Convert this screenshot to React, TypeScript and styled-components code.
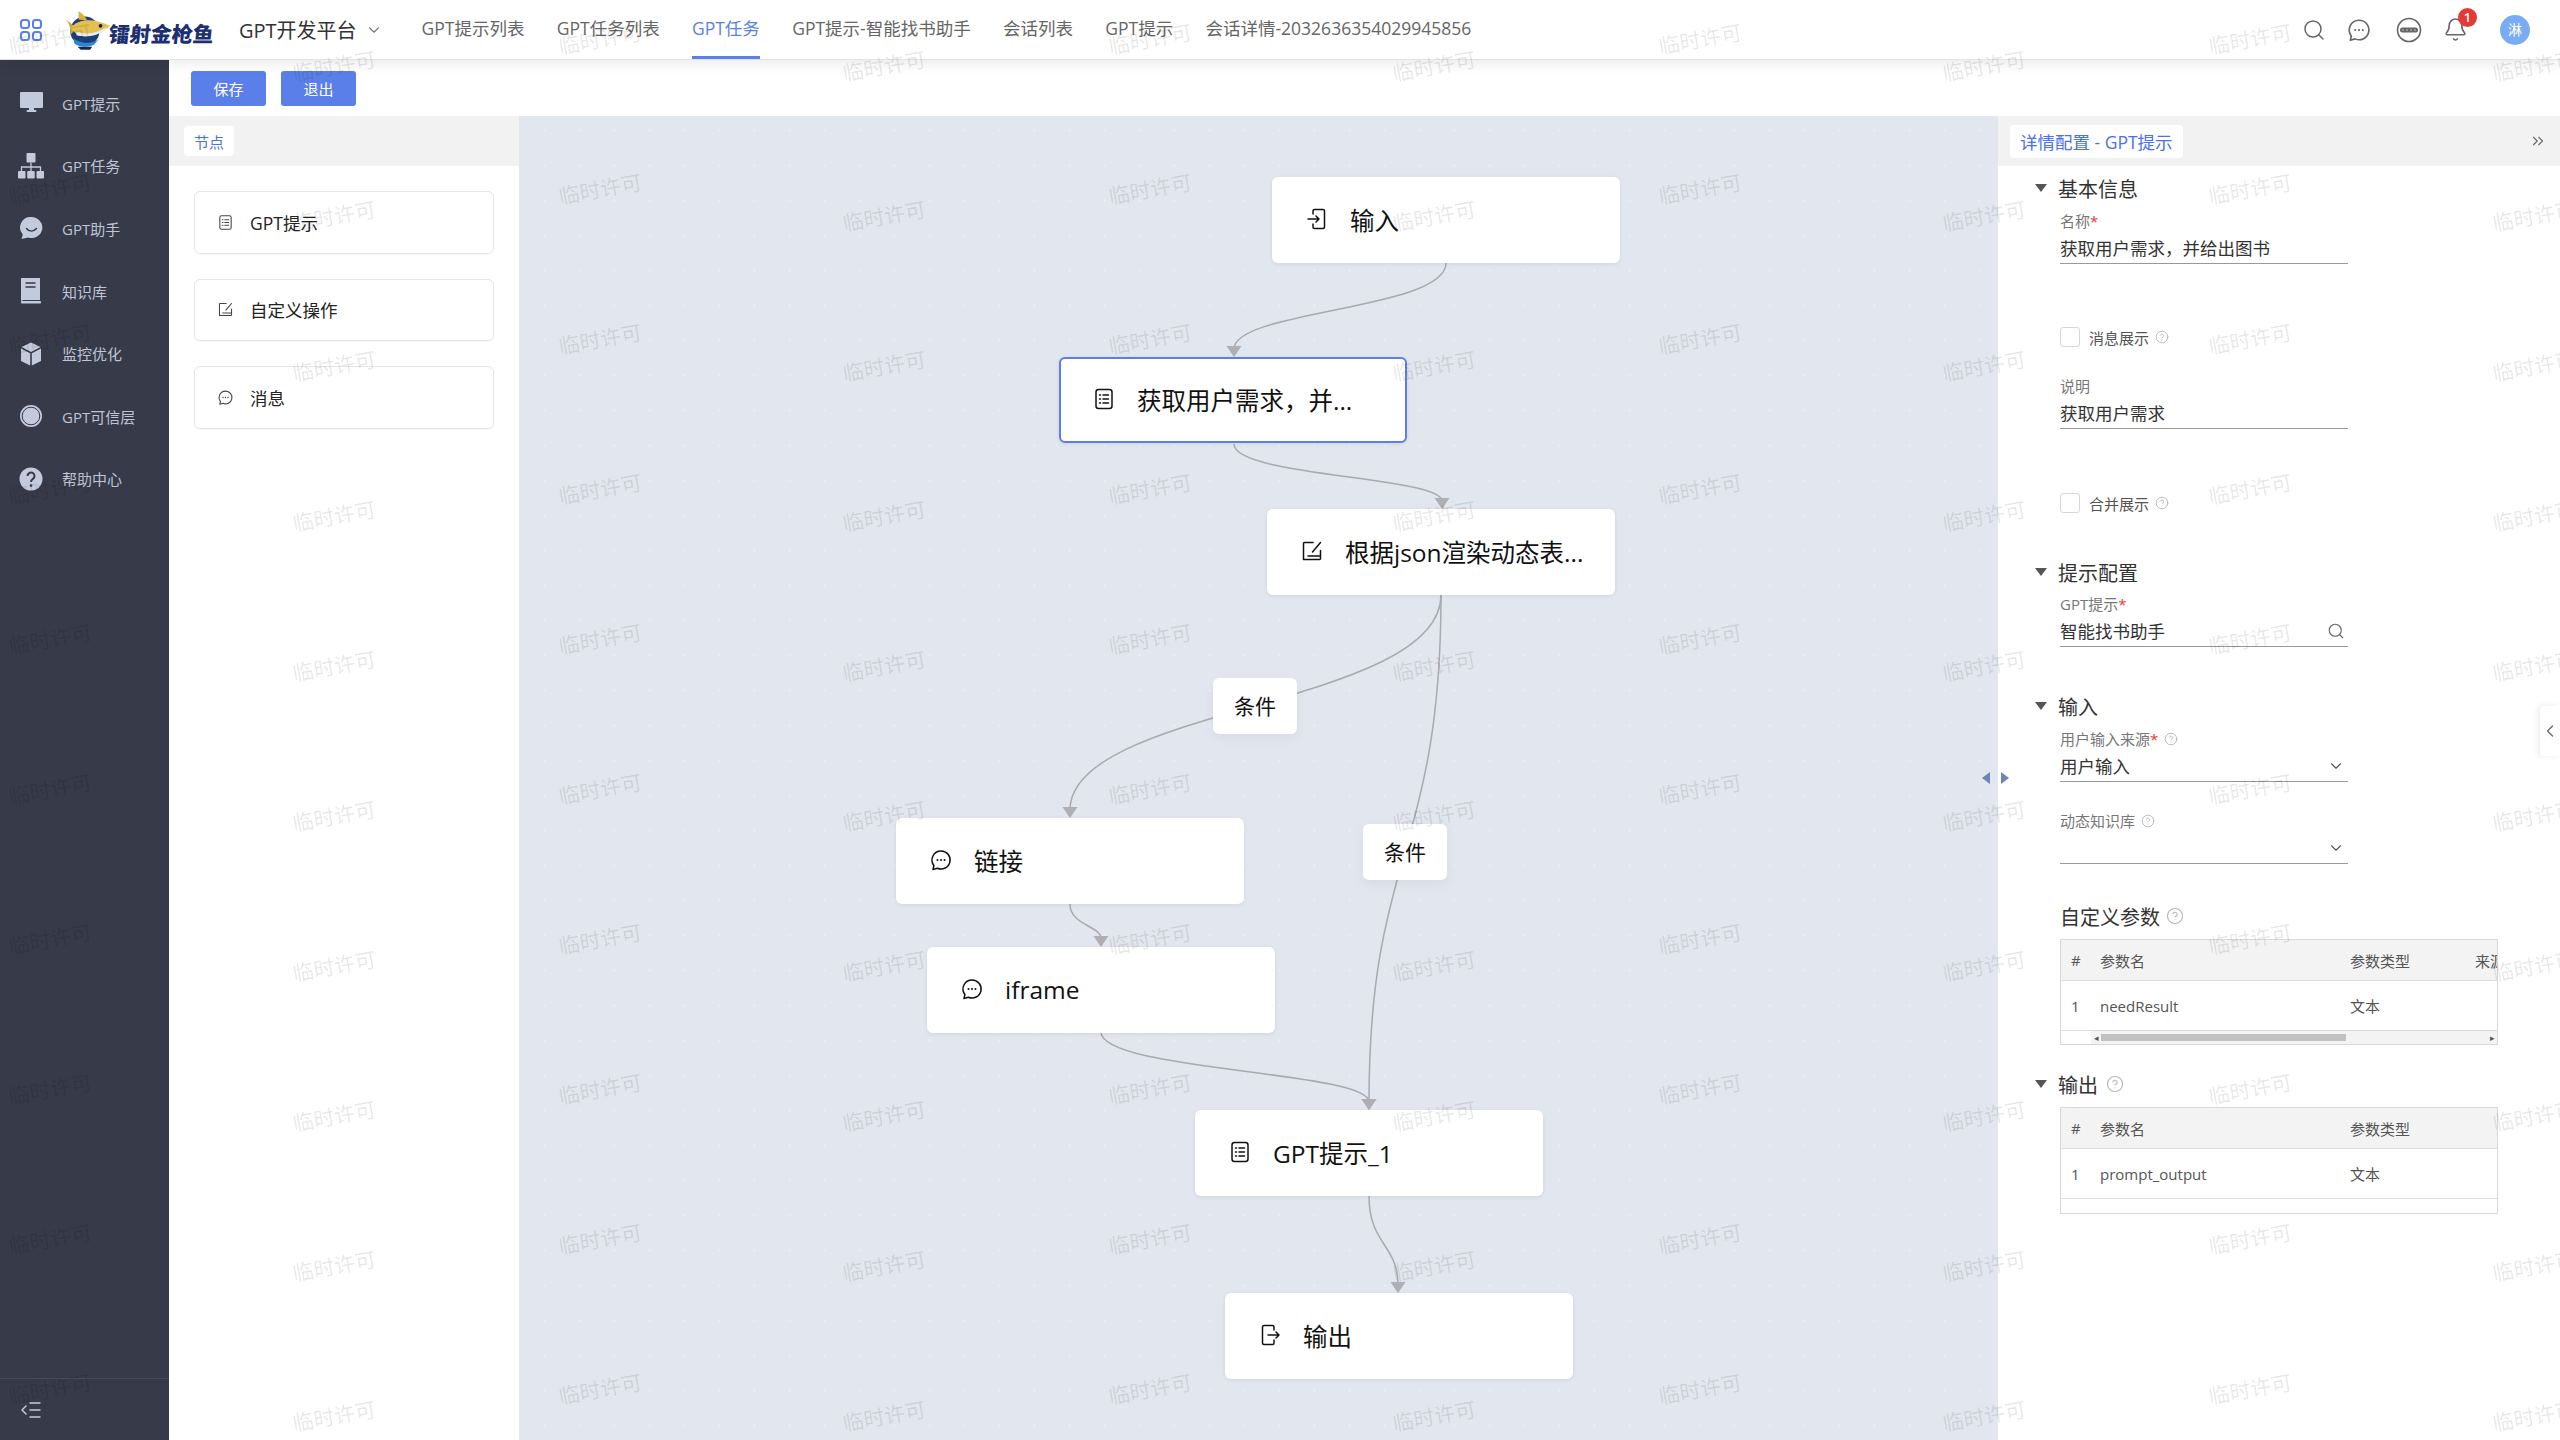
import React from "react"
import styled, { createGlobalStyle } from "styled-components"
import { Search, ChevronDown, ChevronLeft, ChevronsRight, CircleHelp, Bell, IndentDecrease } from "lucide-react"

const GlobalStyle = createGlobalStyle`
  html, body { margin: 0; padding: 0; background: #fff; }
  * { box-sizing: border-box; }
  body {
    font-family: "Open Sans", "Noto Sans CJK SC", sans-serif;
    color: #333;
  }
`

const BLUE = "#5b7fe8"
const TAB_BLUE = "#4a6ff0"

// canvas sits at page (519, 116)
const CX = 519
const CY = 116

type IconKind = "list" | "edit" | "chat" | "in" | "out"

const NodeIcon = ({ kind, size, color = "#111" }: { kind: IconKind; size: number; color?: string }) => (
  <svg width={size} height={size} viewBox="0 0 24 24" fill="none" stroke={color} strokeWidth="1.5" strokeLinecap="round" strokeLinejoin="round">
    {kind === "list" && (
      <>
        <rect x="4" y="2.5" width="16" height="19" rx="2.5" />
        <path d="M7.5 8h1M11 8h5.5M7.5 12h1M11 12h5.5M7.5 16h1M11 16h5.5" />
      </>
    )}
    {kind === "edit" && <path d="M13 3.500H4.500a1 1 0 0 0-1 1v16h16a1 1 0 0 0 1-1V11.500M20.500 3.500l-8 9.500M8 17h12.500" />}
    {kind === "chat" && (
      <>
        <path d="M12 3a9 9 0 1 1-3.6 17.2L4 21.5l.9-4A9 9 0 0 1 12 3z" />
        <path d="M8.5 12h.01M12 12h.01M15.5 12h.01" strokeWidth="2" />
      </>
    )}
    {kind === "in" && <path d="M8 7V4a1.5 1.5 0 0 1 1.5-1.5H18A1.5 1.5 0 0 1 19.5 4v16a1.5 1.5 0 0 1-1.5 1.5H9.5A1.5 1.5 0 0 1 8 20v-3M3 12h11M11 9l3 3-3 3" />}
    {kind === "out" && <path d="M16 7V4a1.5 1.5 0 0 0-1.5-1.5H6A1.5 1.5 0 0 0 4.500 4v16A1.5 1.5 0 0 0 6 21.500h8.500A1.5 1.5 0 0 0 16 20v-3M10 12h11M18 9l3 3-3 3" />}
  </svg>
)

const sideIcons: Record<string, React.ReactNode> = {
  monitor: (
    <svg width="26" height="26" viewBox="0 0 26 26" fill="#c3cadc">
      <path d="M3 2h21a1 1 0 0 1 1 1v14a1 1 0 0 1-1 1H3a1 1 0 0 1-1-1V3a1 1 0 0 1 1-1z" />
      <rect x="11" y="18" width="5" height="3" />
      <rect x="8.500" y="20" width="10" height="2" rx="1" />
    </svg>
  ),
  org: (
    <svg width="26" height="26" viewBox="0 0 26 26" fill="#c3cadc">
      <rect x="8.500" y="0" width="9" height="9.500" rx="1" />
      <rect x="0" y="18" width="7.500" height="7.500" rx="1" />
      <rect x="9.200" y="18" width="7.500" height="7.500" rx="1" />
      <rect x="18.500" y="18" width="7.500" height="7.500" rx="1" />
      <path d="M13 9.500V14M3.500 18v-4h19v4M13 14v4" stroke="#c3cadc" strokeWidth="1.300" fill="none" />
    </svg>
  ),
  bubble: (
    <svg width="26" height="26" viewBox="0 0 26 26">
      <path d="M13.500 2a11 10.500 0 1 1-3.500 20.500L3.500 24l1.300-4.500A10.500 10.500 0 0 1 13.500 2z" fill="#c3cadc" />
      <path d="M8.500 13.500c2.500 3.500 7 3.500 10 0" stroke="#363948" strokeWidth="1.400" fill="none" strokeLinecap="round" />
    </svg>
  ),
  book: (
    <svg width="26" height="26" viewBox="0 0 26 26">
      <path d="M3 0h19v22H5.500C4 22 3 23 3 24z" fill="#c3cadc" />
      <rect x="3" y="23" width="20" height="2.500" rx=".8" fill="#c3cadc" />
      <path d="M7.500 5h10M7.500 9h10" stroke="#363948" strokeWidth="1.300" />
    </svg>
  ),
  cube: (
    <svg width="26" height="26" viewBox="0 0 26 26" fill="#c3cadc">
      <path d="M13 1.500l9.500 4.500-9.500 5-9.500-5z" />
      <path d="M3 7.500l9.200 4.800v12.200L3 20z" />
      <path d="M23 7.500l-9.200 4.800v12.200L23 20z" />
    </svg>
  ),
  ring: (
    <svg width="26" height="26" viewBox="0 0 26 26">
      <circle cx="13" cy="13" r="11" fill="#c3cadc" />
      <circle cx="13" cy="13" r="8.800" fill="#c3cadc" stroke="#363948" strokeWidth="1" />
    </svg>
  ),
  help: (
    <svg width="26" height="26" viewBox="0 0 26 26">
      <circle cx="13" cy="13" r="11.500" fill="#c3cadc" />
      <path d="M9.500 10a3.500 3.500 0 1 1 5.500 2.900c-1.200.8-2 1.400-2 3" stroke="#363948" strokeWidth="2" fill="none" />
      <circle cx="13" cy="19.500" r="1.300" fill="#363948" />
    </svg>
  ),
}

const FishLogo = () => (
  <svg width="48" height="42" viewBox="0 0 46 40">
    <circle cx="20" cy="21" r="14" fill="#1d3f7a" />
    <path d="M14 2c3 2 7 5 8 9l-8-1z" fill="#d9b13a" />
    <path d="M2 10c3 4 5 9 4 15l6-7z" fill="#c9a538" />
    <path d="M6 18c8-9 22-10 38-2-6 8-22 10-32 8z" fill="#e3c04f" />
    <path d="M12 22c10 3 20 1 30-5-5 8-20 11-30 8z" fill="#e9edf2" />
    <circle cx="35" cy="16" r="1.800" fill="#1a1a1a" />
    <path d="M9 28c6 5 16 6 24 1l-4 5c-6 3-14 3-19-1z" fill="#2b86d1" />
    <path d="M13 36h14l-2 3H16z" fill="#14284f" />
  </svg>
)

type NodeData = { x: number; y: number; icon: IconKind; text: string; active?: boolean }

const flowNodes: NodeData[] = [
  { x: 1272, y: 177, icon: "in", text: "输入" },
  { x: 1059, y: 357, icon: "list", text: "获取用户需求，并...", active: true },
  { x: 1267, y: 509, icon: "edit", text: "根据json渲染动态表..." },
  { x: 896, y: 818, icon: "chat", text: "链接" },
  { x: 927, y: 947, icon: "chat", text: "iframe" },
  { x: 1195, y: 1110, icon: "list", text: "GPT提示_1" },
  { x: 1225, y: 1293, icon: "out", text: "输出" },
]

const edges = [
  [1446, 263, 1234, 357],
  [1234, 444, 1442, 509],
  [1441, 595, 1070, 818],
  [1441, 595, 1369, 1110],
  [1070, 904, 1101, 947],
  [1101, 1032, 1369, 1110],
  [1369, 1196, 1398, 1293],
]

const edgeLabels = [
  { x: 1213, y: 678 },
  { x: 1363, y: 824 },
]

const navItems = ["GPT提示列表", "GPT任务列表", "GPT任务", "GPT提示-智能找书助手", "会话列表", "GPT提示", "会话详情-2032636354029945856"]

const sideItems = [
  ["monitor", "GPT提示"],
  ["org", "GPT任务"],
  ["bubble", "GPT助手"],
  ["book", "知识库"],
  ["cube", "监控优化"],
  ["ring", "GPT可信层"],
  ["help", "帮助中心"],
]

const paletteItems: { icon: IconKind; text: string; h: number }[] = [
  { icon: "list", text: "GPT提示", h: 63 },
  { icon: "edit", text: "自定义操作", h: 62 },
  { icon: "chat", text: "消息", h: 63 },
]

const watermarks: { x: number; y: number }[] = []
for (let k = 0; k < 5; k++) {
  for (let j = 0; j < 10; j++) {
    watermarks.push({ x: 52 + 550 * k, y: 38 + 150 * j })
    watermarks.push({ x: 336 + 550 * k, y: 65 + 150 * j })
  }
}

const Help = ({ size = 14 }: { size?: number }) => <CircleHelp size={size} color="#b5b5b5" strokeWidth={1.5} />

export default function App() {
  return (
    <Page>
      <GlobalStyle />
      <Header>
        <GridIcon width="24" height="24" viewBox="0 0 24 24" fill="none" stroke={BLUE} strokeWidth="2">
          <rect x="2" y="2" width="8" height="8" rx="2.500" />
          <rect x="14" y="2" width="8" height="8" rx="2.500" />
          <rect x="2" y="14" width="8" height="8" rx="2.500" />
          <rect x="14" y="14" width="8" height="8" rx="2.500" />
        </GridIcon>
        <Logo>
          <FishLogo />
          <LogoText>镭射金枪鱼</LogoText>
        </Logo>
        <PlatformName>
          GPT开发平台
          <ChevronDown size={18} color="#777" strokeWidth={1.5} />
        </PlatformName>
        <Nav>
          {navItems.map((item, i) => (
            <NavItem key={item + i} $active={i === 2}>
              {item}
            </NavItem>
          ))}
        </Nav>
        <HeaderTools>
          <Search size={24} color="#666" strokeWidth={1.500} />
          <NodeIcon kind="chat" size={26} color="#666" />
          <PillIcon width="26" height="26" viewBox="0 0 26 26" fill="none">
            <circle cx="13" cy="13" r="11.500" stroke="#666" strokeWidth="1.600" />
            <rect x="4" y="10.500" width="18" height="5" rx="2.500" fill="#666" />
            <path d="M7 13h.01M11 13h.01M15 13h.01M19 13h.01" stroke="#ddd" strokeWidth="1.500" strokeLinecap="round" />
          </PillIcon>
          <BellWrap>
            <Bell size={25} color="#666" strokeWidth={1.500} />
            <Badge>1</Badge>
          </BellWrap>
          <Avatar>淋</Avatar>
        </HeaderTools>
      </Header>
      <Body>
        <Sidebar>
          <SideList>
            {sideItems.map(([icon, label]) => (
              <SideItem key={label}>
                <SideIcon>{sideIcons[icon]}</SideIcon>
                <span>{label}</span>
              </SideItem>
            ))}
          </SideList>
          <SideFooter>
            <IndentDecrease size={24} color="#c3cadc" strokeWidth={1.500} />
          </SideFooter>
        </Sidebar>
        <Main>
          <Toolbar>
            <ActionButton>保存</ActionButton>
            <ActionButton>退出</ActionButton>
          </Toolbar>
          <Workspace>
            <Palette>
              <TabStrip>
                <PanelTab>节点</PanelTab>
              </TabStrip>
              <CardList>
                {paletteItems.map((item) => (
                  <PaletteCard key={item.text} $h={item.h}>
                    <NodeIcon kind={item.icon} size={17} color="#444" />
                    <span>{item.text}</span>
                  </PaletteCard>
                ))}
              </CardList>
            </Palette>
            <Canvas>
              <EdgeLayer width="1479" height="1324">
                {edges.map(([x1, y1, x2, y2], i) => {
                  const ax = x1 - CX
                  const ay = y1 - CY
                  const bx = x2 - CX
                  const by = y2 - CY
                  const my = (ay + by) / 2
                  return (
                    <g key={i}>
                      <path d={`M${ax} ${ay}C${ax} ${my} ${bx} ${my} ${bx} ${by - 8}`} fill="none" stroke="#a9a9ae" strokeWidth="1.500" />
                      <path d={`M${bx} ${by}l-7.500 -11h15z`} fill="#aeaeb3" />
                    </g>
                  )
                })}
              </EdgeLayer>
              {edgeLabels.map((l) => (
                <EdgeLabel key={l.x} style={{ left: l.x - CX, top: l.y - CY }}>
                  条件
                </EdgeLabel>
              ))}
              {flowNodes.map((n) => (
                <FlowNode key={n.text} $active={n.active} style={{ left: n.x - CX, top: n.y - CY }}>
                  <NodeIcon kind={n.icon} size={24} />
                  <span>{n.text}</span>
                </FlowNode>
              ))}
              <SplitHandle>
                <svg width="28" height="12" viewBox="0 0 28 12">
                  <path d="M8 0v12L0 6z" fill="#6d84b8" />
                  <path d="M19 0v12l8-6z" fill="#6d84b8" />
                </svg>
              </SplitHandle>
            </Canvas>
            <Detail>
              <DetailStrip>
                <PanelTab $large>详情配置 - GPT提示</PanelTab>
                <ChevronsRight size={18} color="#666" strokeWidth={1.500} />
              </DetailStrip>
              <Form>
                <SectionHead $mt={8}>
                  <Caret />
                  基本信息
                </SectionHead>
                <Field $mt={10}>
                  <FieldLabel>
                    名称<Required>*</Required>
                  </FieldLabel>
                  <Control>获取用户需求，并给出图书</Control>
                </Field>
                <CheckRow $mt={63}>
                  <CheckBox />
                  消息展示
                  <Help />
                </CheckRow>
                <Field $mt={30}>
                  <FieldLabel>说明</FieldLabel>
                  <Control>获取用户需求</Control>
                </Field>
                <CheckRow $mt={64}>
                  <CheckBox />
                  合并展示
                  <Help />
                </CheckRow>
                <SectionHead $mt={45}>
                  <Caret />
                  提示配置
                </SectionHead>
                <Field $mt={9}>
                  <FieldLabel>
                    GPT提示<Required>*</Required>
                  </FieldLabel>
                  <Control>
                    智能找书助手
                    <Search size={18} color="#666" strokeWidth={1.500} />
                  </Control>
                </Field>
                <SectionHead $mt={45}>
                  <Caret />
                  输入
                </SectionHead>
                <Field $mt={10}>
                  <FieldLabel>
                    用户输入来源<Required>*</Required>
                    <Help />
                  </FieldLabel>
                  <Control>
                    用户输入
                    <ChevronDown size={18} color="#555" strokeWidth={1.500} />
                  </Control>
                </Field>
                <Field $mt={30}>
                  <FieldLabel>
                    动态知识库
                    <Help />
                  </FieldLabel>
                  <Control>
                    <span />
                    <ChevronDown size={18} color="#555" strokeWidth={1.500} />
                  </Control>
                </Field>
                <ParamTitle>
                  自定义参数
                  <Help size={18} />
                </ParamTitle>
                <ParamTable $mt={9}>
                  <TableRow $head>
                    <Cell>#</Cell>
                    <Cell>参数名</Cell>
                    <Cell>参数类型</Cell>
                    <Cell>来源</Cell>
                  </TableRow>
                  <TableRow>
                    <Cell>1</Cell>
                    <Cell>needResult</Cell>
                    <Cell>文本</Cell>
                    <Cell />
                  </TableRow>
                  <ScrollRow>
                    <ScrollArrow>◂</ScrollArrow>
                    <ScrollThumb />
                    <ScrollArrow>▸</ScrollArrow>
                  </ScrollRow>
                </ParamTable>
                <SectionHead $mt={25}>
                  <Caret />
                  输出
                  <Help size={18} />
                </SectionHead>
                <ParamTable $mt={9}>
                  <TableRow $head>
                    <Cell>#</Cell>
                    <Cell>参数名</Cell>
                    <Cell>参数类型</Cell>
                    <Cell />
                  </TableRow>
                  <TableRow>
                    <Cell>1</Cell>
                    <Cell>prompt_output</Cell>
                    <Cell>文本</Cell>
                    <Cell />
                  </TableRow>
                </ParamTable>
              </Form>
              <CollapseTab>
                <ChevronLeft size={20} color="#666" strokeWidth={1.500} />
              </CollapseTab>
            </Detail>
          </Workspace>
        </Main>
      </Body>
      <WatermarkLayer>
        {watermarks.map((w) => (
          <Watermark key={`${w.x}-${w.y}`} style={{ left: w.x - 44, top: w.y - 15 }}>
            临时许可
          </Watermark>
        ))}
      </WatermarkLayer>
    </Page>
  )
}

const Page = styled.div`
  position: relative;
  width: 2560px;
  height: 1440px;
  overflow: hidden;
  display: flex;
  flex-direction: column;
`
const Header = styled.header`
  position: relative;
  z-index: 5;
  height: 60px;
  flex: none;
  display: flex;
  align-items: center;
  background: #fff;
  border-bottom: 1px solid #e2e2e2;
  box-shadow: 0 3px 14px rgba(0, 0, 0, 0.09);
`
const GridIcon = styled.svg`
  margin-left: 19px;
  flex: none;
`
const Logo = styled.div`
  display: flex;
  align-items: center;
  margin-left: 21px;
  width: 175px;
  flex: none;
`
const LogoText = styled.span`
  margin-top: 6px;
  margin-left: -3px;
  font-size: 21px;
  font-weight: 900;
  color: #1c2f70;
  font-family: "Noto Sans CJK SC", sans-serif;
  white-space: nowrap;
  transform: skewX(-6deg);
`
const PlatformName = styled.div`
  display: flex;
  align-items: center;
  gap: 8px;
  font-size: 20px;
  color: #333;
  white-space: nowrap;
  flex: none;
`
const Nav = styled.nav`
  display: flex;
  align-items: stretch;
  gap: 32.300px;
  height: 59px;
  margin-left: 39px;
`
const NavItem = styled.div<{ $active?: boolean }>`
  display: flex;
  align-items: center;
  padding-bottom: 2px;
  font-size: 17.5px;
  white-space: nowrap;
  color: ${(p) => (p.$active ? BLUE : "#666")};
  border-bottom: 3px solid ${(p) => (p.$active ? BLUE : "transparent")};
`
const HeaderTools = styled.div`
  margin-left: auto;
  margin-right: 30px;
  display: flex;
  align-items: center;
  gap: 20px;
`
const PillIcon = styled.svg`
  margin-left: 4px;
`
const BellWrap = styled.div`
  position: relative;
  display: flex;
  margin-left: 1px;
  margin-right: 12px;
`
const Badge = styled.span`
  position: absolute;
  top: -9px;
  left: 15px;
  width: 19px;
  height: 19px;
  border-radius: 50%;
  background: #e53935;
  color: #fff;
  font-size: 13px;
  font-weight: 600;
  line-height: 19px;
  text-align: center;
`
const Avatar = styled.div`
  width: 30px;
  height: 30px;
  border-radius: 50%;
  background: #7aacf5;
  color: #fff;
  font-size: 14px;
  line-height: 30px;
  text-align: center;
`
const Body = styled.div`
  flex: 1;
  display: flex;
  min-height: 0;
`
const Sidebar = styled.aside`
  width: 169px;
  flex: none;
  display: flex;
  flex-direction: column;
  background: #373a48;
`
const SideList = styled.div`
  padding-top: 12px;
`
const SideItem = styled.div`
  height: 62.6px;
  display: flex;
  align-items: center;
  gap: 18px;
  padding-left: 18px;
  font-size: 15px;
  color: #bfc5d6;
  white-space: nowrap;
`
const SideIcon = styled.span`
  display: flex;
  width: 26px;
  height: 26px;
  flex: none;
`
const SideFooter = styled.div`
  margin-top: auto;
  height: 62px;
  border-top: 1px solid #474a59;
  display: flex;
  align-items: center;
  padding-left: 19px;
`
const Main = styled.div`
  flex: 1;
  min-width: 0;
  display: flex;
  flex-direction: column;
`
const Toolbar = styled.div`
  height: 56px;
  flex: none;
  display: flex;
  align-items: flex-start;
  gap: 15px;
  padding: 11px 22px 0;
  background: #fff;
`
const ActionButton = styled.button`
  width: 75px;
  height: 35px;
  border: 0;
  border-radius: 3px;
  background: ${BLUE};
  color: #fff;
  font-family: inherit;
  font-size: 15px;
`
const Workspace = styled.div`
  flex: 1;
  display: flex;
  min-height: 0;
`
const Palette = styled.div`
  width: 350px;
  flex: none;
  background: #fff;
`
const TabStrip = styled.div`
  height: 50px;
  display: flex;
  align-items: center;
  padding-left: 15px;
  background: #f2f2f2;
`
const PanelTab = styled.div<{ $large?: boolean }>`
  display: flex;
  align-items: center;
  height: ${(p) => (p.$large ? 33 : 30)}px;
  padding: 0 10px;
  border-radius: 4px;
  background: #fff;
  color: ${TAB_BLUE};
  font-size: ${(p) => (p.$large ? 17.5 : 15)}px;
  white-space: nowrap;
`
const CardList = styled.div`
  display: flex;
  flex-direction: column;
  gap: 25px;
  padding: 25px 25px 0 25px;
`
const PaletteCard = styled.div<{ $h: number }>`
  height: ${(p) => p.$h}px;
  display: flex;
  align-items: center;
  gap: 16px;
  padding-left: 22px;
  padding-bottom: 1px;
  border: 1.5px solid #e6e6e6;
  border-radius: 6px;
  font-size: 17.5px;
  color: #222;
  box-shadow: 0 1px 2px rgba(0, 0, 0, 0.04);
`
const Canvas = styled.div`
  position: relative;
  flex: 1;
  min-width: 0;
  background-color: #e2e6ee;
  background-image: radial-gradient(circle, #e9ecf2 1.2px, transparent 1.4px);
  background-size: 35px 35px;
  background-position: 8px -3px;
`
const EdgeLayer = styled.svg`
  position: absolute;
  left: 0;
  top: 0;
`
const FlowNode = styled.div<{ $active?: boolean }>`
  position: absolute;
  width: 348px;
  height: 86px;
  display: flex;
  align-items: center;
  gap: 21px;
  padding-left: ${(p) => (p.$active ? 31 : 33)}px;
  padding-bottom: 2px;
  background: #fff;
  border: ${(p) => (p.$active ? `2.5px solid ${BLUE}` : "none")};
  border-radius: 6px;
  box-shadow: 0 1px 4px rgba(0, 0, 0, 0.08);
  font-size: 24.500px;
  color: #111;
  white-space: nowrap;
`
const EdgeLabel = styled.div`
  position: absolute;
  width: 84px;
  height: 56px;
  padding-bottom: 2px;
  display: flex;
  align-items: center;
  justify-content: center;
  background: #fff;
  border-radius: 6px;
  box-shadow: 0 4px 12px rgba(0, 0, 0, 0.05);
  font-size: 21px;
  color: #111;
`
const SplitHandle = styled.div`
  position: absolute;
  right: -12px;
  top: 656px;
  z-index: 2;
  display: flex;
`
const Detail = styled.div`
  position: relative;
  width: 562px;
  flex: none;
  background: #fff;
`
const DetailStrip = styled.div`
  height: 50px;
  display: flex;
  align-items: center;
  justify-content: space-between;
  padding: 0 13px 0 12px;
  background: #f2f2f2;
`
const Form = styled.div`
  display: flex;
  flex-direction: column;
  padding-left: 62px;
`
const SectionHead = styled.div<{ $mt: number }>`
  height: 28px;
  margin-top: ${(p) => p.$mt}px;
  margin-left: -25px;
  display: flex;
  align-items: center;
  font-size: 20px;
  color: #333;
  svg {
    margin-left: 8px;
  }
`
const Caret = styled.i`
  width: 0;
  height: 0;
  margin-right: 11px;
  border-left: 6px solid transparent;
  border-right: 6px solid transparent;
  border-top: 8px solid #555;
`
const Field = styled.div<{ $mt: number }>`
  width: 288px;
  margin-top: ${(p) => p.$mt}px;
`
const FieldLabel = styled.div`
  height: 20px;
  padding-bottom: 3px;
  display: flex;
  align-items: center;
  font-size: 15px;
  color: #777;
  svg {
    margin-left: 6px;
  }
`
const Required = styled.span`
  color: #e53935;
`
const Control = styled.div`
  height: 32px;
  display: flex;
  align-items: center;
  justify-content: space-between;
  padding-right: 3px;
  border-bottom: 1.5px solid #999;
  font-size: 17.5px;
  color: #333;
  white-space: nowrap;
`
const CheckRow = styled.div<{ $mt: number }>`
  height: 20px;
  margin-top: ${(p) => p.$mt}px;
  display: flex;
  align-items: center;
  font-size: 15px;
  color: #555;
  svg {
    margin-left: 6px;
  }
`
const CheckBox = styled.span`
  width: 20px;
  height: 20px;
  margin-right: 9px;
  border: 1.5px solid #d8d8d8;
  border-radius: 3px;
  background: #fff;
`
const ParamTitle = styled.div`
  height: 28px;
  margin-top: 38px;
  display: flex;
  align-items: center;
  gap: 6px;
  font-size: 20px;
  color: #333;
`
const ParamTable = styled.div<{ $mt: number }>`
  width: 438px;
  margin-top: ${(p) => p.$mt}px;
  padding-bottom: 14px;
  border: 1.5px solid #d8d8d8;
  overflow: hidden;
  &:has(> :nth-child(3)) {
    padding-bottom: 0;
  }
`
const TableRow = styled.div<{ $head?: boolean }>`
  height: ${(p) => (p.$head ? 41 : 50)}px;
  display: grid;
  grid-template-columns: 39px 250px 125px 100px;
  align-items: center;
  background: ${(p) => (p.$head ? "#f3f3f3" : "#fff")};
  border-bottom: 1.5px solid #dcdcdc;
  font-size: 15px;
  color: #555;
  white-space: nowrap;
`
const Cell = styled.div`
  &:first-child {
    padding-left: 10px;
  }
`
const ScrollRow = styled.div`
  height: 13px;
  margin-left: 30px;
  display: flex;
  align-items: center;
  justify-content: space-between;
  gap: 0;
  background: #f3f3f3;
`
const ScrollArrow = styled.span`
  width: 10px;
  font-size: 9px;
  line-height: 12px;
  text-align: center;
  color: #555;
`
const ScrollThumb = styled.div`
  width: 245px;
  height: 7px;
  background: #c1c1c1;
  margin-right: auto;
`
const CollapseTab = styled.div`
  position: absolute;
  right: 0;
  top: 590px;
  width: 20px;
  height: 50px;
  display: flex;
  align-items: center;
  justify-content: center;
  background: #fff;
  border-radius: 4px 0 0 4px;
  box-shadow: -2px 0 6px rgba(0, 0, 0, 0.08);
`
const WatermarkLayer = styled.div`
  position: absolute;
  inset: 0;
  z-index: 20;
  pointer-events: none;
`
const Watermark = styled.span`
  position: absolute;
  font-family: "Noto Sans CJK SC", sans-serif;
  font-size: 21px;
  font-weight: 400;
  line-height: 30px;
  color: rgba(0, 0, 0, 0.1);
  white-space: nowrap;
  transform: rotate(-10deg);
`
